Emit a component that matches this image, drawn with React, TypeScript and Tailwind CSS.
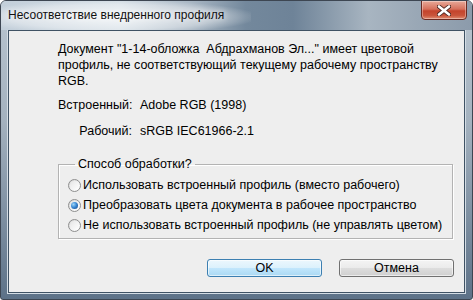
import React from "react";

function Radio({ checked }: { checked?: boolean }) {
  return (
    <div className="relative w-[13px] h-[13px] rounded-full border border-[#8e8f8f] bg-[linear-gradient(135deg,#d4d4d4,#f4f4f4_60%,#ffffff)] flex items-center justify-center shrink-0">
      <div className="w-[9px] h-[9px] rounded-full bg-[linear-gradient(135deg,#e6e6e6,#ffffff)] flex items-center justify-center">
        {checked && (
          <div className="w-[7px] h-[7px] rounded-full bg-[radial-gradient(circle_at_35%_35%,#9fd6f7_0%,#3b8ad6_45%,#14427f_100%)]" />
        )}
      </div>
    </div>
  );
}

export default function App() {
  const font = { fontFamily: '"Liberation Sans", Arial, sans-serif' };
  return (
    <div
      className="w-[473px] h-[300px] flex flex-col rounded-t-[6px] rounded-b-[3px] border border-[#3d4652] bg-[linear-gradient(to_bottom,#b9c5d0_0%,#a4b2bf_40%,#5d7288_100%)] overflow-hidden text-black"
      style={font}
    >
      <div className="h-[29px] flex items-start relative bg-[linear-gradient(to_right,#c3cfda_0%,#d2dce4_25%,#aab8c5_40%,#73889c_52%,#6e8398_62%,#a8b5c1_78%,#9aa8b6_88%,#8c9bab_100%)]">
        <div className="absolute left-0 top-0 w-[250px] h-[29px] bg-[radial-gradient(ellipse_at_45%_55%,rgba(255,255,255,0.75)_0%,rgba(255,255,255,0.35)_55%,rgba(255,255,255,0)_75%)]" />
        <div className="relative ml-[7px] mt-[6px] text-[12px] leading-[17px] text-[#111] [text-shadow:0_0_6px_#ffffff]">
          Несоответствие внедренного профиля
        </div>
        <div className="ml-auto mr-[5px] mt-[-1px] w-[46px] h-[20px] rounded-b-[4px] border border-[#6b2a22] bg-[linear-gradient(to_bottom,#e8a999_0%,#d6705c_45%,#c4442c_55%,#c9543a_80%,#e08d72_100%)] flex items-center justify-center relative shadow-[inset_0_0_0_1px_rgba(255,255,255,0.35)]">
          <svg width="14" height="11" viewBox="0 0 14 11">
            <path d="M2 1.5 L12 9.5 M12 1.5 L2 9.5" stroke="#4a2620" strokeWidth="4.2" strokeLinecap="round" />
            <path d="M2 1.5 L12 9.5 M12 1.5 L2 9.5" stroke="#ffffff" strokeWidth="2.6" strokeLinecap="round" />
          </svg>
        </div>
      </div>
      <div className="flex-1 mx-[7px] mb-[6px] border border-[#3f5264] shadow-[0_0_0_1px_#d4dde5] bg-[#eeeeee] flex flex-col pl-[49px] text-[12.5px] leading-[16px]">
        <div className="mt-[10px] whitespace-pre">
          <div>Документ "1-14-обложка  Абдрахманов Эл..." имеет цветовой</div>
          <div>профиль, не соответствующий текущему рабочему пространству</div>
          <div>RGB.</div>
        </div>
        <div className="mt-[8px] flex whitespace-pre">
          <div className="w-[74px] text-right">Встроенный:</div>
          <div className="ml-[8px]">Adobe RGB (1998)</div>
        </div>
        <div className="mt-[10px] flex whitespace-pre">
          <div className="w-[74px] text-right">Рабочий:</div>
          <div className="ml-[8px]">sRGB IEC61966-2.1</div>
        </div>
        <fieldset className="mt-[16px] w-[395px] border border-[#b3b3b3] shadow-[1px_1px_0_#ffffff,inset_1px_1px_0_#ffffff] pl-[9px] pb-[5px] m-0">
          <legend className="ml-[7px] px-[3px] leading-[18px]">Способ обработки?</legend>
          <div className="mt-[4px] flex flex-col gap-[4px]">
            <div className="flex items-center h-[16px] gap-[2px]">
              <Radio />
              <span>Использовать встроенный профиль (вместо рабочего)</span>
            </div>
            <div className="flex items-center h-[16px] gap-[2px]">
              <Radio checked />
              <span>Преобразовать цвета документа в рабочее пространство</span>
            </div>
            <div className="flex items-center h-[16px] gap-[2px]">
              <Radio />
              <span>Не использовать встроенный профиль (не управлять цветом)</span>
            </div>
          </div>
        </fieldset>
        <div className="mt-[20px] flex gap-[17px] pl-[149px]">
          <div className="w-[115px] h-[18px] rounded-[3px] border border-[#3c7fb1] bg-[linear-gradient(to_bottom,#ecf7fd_0%,#dcf1fc_48%,#c1e6fc_52%,#aad9f3_100%)] shadow-[inset_0_0_0_1px_rgba(255,255,255,0.6)] flex items-center justify-center leading-[14px]">
            OK
          </div>
          <div className="w-[115px] h-[18px] rounded-[3px] border border-[#707070] bg-[linear-gradient(to_bottom,#f4f4f4_0%,#ebebeb_48%,#dddddd_52%,#cfcfcf_100%)] shadow-[inset_0_0_0_1px_rgba(255,255,255,0.6)] flex items-center justify-center leading-[14px]">
            Отмена
          </div>
        </div>
      </div>
    </div>
  );
}
